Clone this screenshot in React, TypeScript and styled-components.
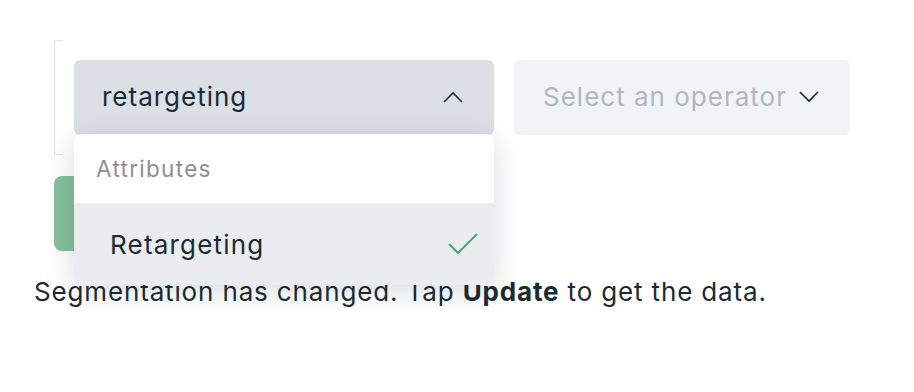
import React from "react";
import styled, { createGlobalStyle } from "styled-components";

const Global = createGlobalStyle`
  html, body { margin: 0; padding: 0; background: #ffffff; }
  body { font-family: Inter, "Noto Sans", sans-serif; color: #1b2b33; }
`;

const Page = styled.div`
  padding: 40px 0 0 34px;
`;

const Group = styled.div`
  position: relative;
  margin-left: 20px;
  padding: 20px 0 20px 20px;
  border-left: 1px solid #e1e2e6;
  &::before, &::after {
    content: "";
    position: absolute;
    left: 0;
    width: 8px;
    height: 1px;
    background: #e1e2e6;
  }
  &::before { top: 0; }
  &::after { bottom: 0; }
`;

const Row = styled.div`
  display: flex;
  gap: 20px;
  margin-left: -1px;
`;

const SelectWrap = styled.div`
  position: relative;
`;

const SelectBox = styled.div<{ $open?: boolean; $width: number }>`
  box-sizing: border-box;
  width: ${(p) => p.$width}px;
  height: 75px;
  border-radius: 6px;
  background: ${(p) => (p.$open ? "#dcdfe6" : "#f2f3f7")};
  display: flex;
  align-items: center;
  justify-content: space-between;
  padding: 0 31px 2px 28px;
  gap: 12px;
  svg { flex-shrink: 0; }
`;

const Value = styled.span<{ $placeholder?: boolean }>`
  font-size: 26px;
  letter-spacing: 1px;
  white-space: nowrap;
  color: ${(p) => (p.$placeholder ? "#b3b5c3" : "#1b2b33")};
  padding-left: ${(p) => (p.$placeholder ? "1px" : "0")};
`;

const Menu = styled.div`
  position: absolute;
  top: 74px;
  left: 0;
  width: 420px;
  background: #ffffff;
  border-radius: 8px;
  box-shadow: 0 6px 28px rgba(20, 30, 50, 0.16);
  overflow: hidden;
  z-index: 5;
`;

const MenuHeader = styled.div`
  height: 69px;
  box-sizing: border-box;
  padding: 0 22px;
  display: flex;
  align-items: center;
  font-size: 22.5px;
  letter-spacing: 1.3px;
  color: #8f8f8f;
`;

const Option = styled.div`
  height: 82px;
  box-sizing: border-box;
  padding: 0 16px 0 36px;
  display: flex;
  align-items: center;
  justify-content: space-between;
  background: #ebecf0;
  font-size: 26px;
  letter-spacing: 1.2px;
  color: #1b2b33;
`;

const UpdateButton = styled.div`
  margin: 21px 0 0 20px;
  width: 200px;
  height: 75px;
  border-radius: 8px;
  background: #85bf9a;
`;

const Message = styled.p`
  margin: 23px 0 0;
  font-size: 26px;
  letter-spacing: 0.85px;
  line-height: 36px;
  color: #1b2b33;
  b { font-weight: 700; }
`;

const Chevron = ({ up }: { up?: boolean }) => (
  <svg width="20" height="12" viewBox="0 0 20 12" fill="none">
    <path
      d={up ? "M1 11 L10 2 L19 11" : "M1 1 L10 10 L19 1"}
      stroke="#1b2b33"
      strokeWidth="1.6"
    />
  </svg>
);

const Check = () => (
  <svg width="30" height="22" viewBox="0 0 30 22" fill="none">
    <path d="M1 11 L10 20 L29 1" stroke="#45a872" strokeWidth="2" />
  </svg>
);

export default function App() {
  return (
    <>
      <Global />
      <Page>
        <Group>
          <Row>
            <SelectWrap>
              <SelectBox $open $width={420}>
                <Value>retargeting</Value>
                <Chevron up />
              </SelectBox>
              <Menu>
                <MenuHeader>Attributes</MenuHeader>
                <Option>
                  <span>Retargeting</span>
                  <Check />
                </Option>
              </Menu>
            </SelectWrap>
            <SelectBox $width={336}>
              <Value $placeholder>Select an operator</Value>
              <Chevron />
            </SelectBox>
          </Row>
        </Group>
        <UpdateButton />
        <Message>
          Segmentation has changed. Tap <b>Update</b> to get the data.
        </Message>
      </Page>
    </>
  );
}
